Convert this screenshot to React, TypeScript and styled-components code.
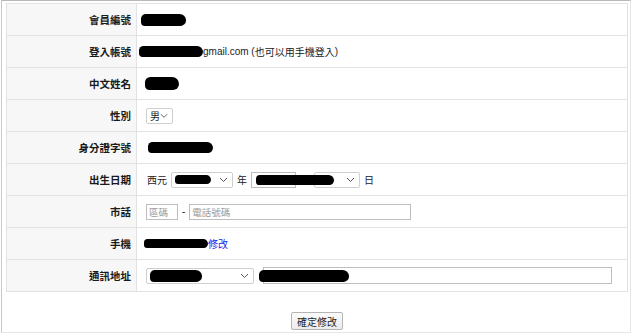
import React from "react";
import styled, { createGlobalStyle } from "styled-components";

const Global = createGlobalStyle`
  html, body { margin: 0; padding: 0; background: #fff; }
  body { font-family: "Liberation Sans", "Noto Sans CJK TC", sans-serif; color: #222; }
`;

const Frame = styled.div`
  box-sizing: border-box;
  width: 630px;
  height: 333px;
  margin-left: 1px;
  border-top: 1px solid #b9b9b9;
  border-left: 1px solid #c8c8c8;
  border-right: 1px solid #e6e6e6;
  border-bottom: 1px solid #e6e6e6;
  padding: 2px 2px 0 4px;
  display: flex;
  flex-direction: column;
  align-items: flex-start;
`;

const Table = styled.table`
  width: 622px;
  border-collapse: collapse;
  border: 1px solid #e2e2e2;
`;

const Row = styled.tr`
  height: 32px;
  border-bottom: 1px solid #e2e2e2;
`;

const Label = styled.th`
  width: 124px;
  padding: 0 5px 0 0;
  background: #f7f7f7;
  border-right: 1px solid #e2e2e2;
  text-align: right;
  font-family: "Noto Sans CJK TC", sans-serif;
  font-size: 10.5px;
  font-weight: 700;
  color: #1a1a1a;
`;

const Value = styled.td`
  padding: 0 0 0 ${(p: { $pad?: number }) => p.$pad ?? 4}px;
  background: #fff;
  font-size: 10px;
  color: #222;
`;

const Line = styled.div`
  display: flex;
  align-items: center;
  gap: ${(p: { $gap?: number }) => p.$gap ?? 4}px;
  font-family: "Liberation Sans", "Noto Sans CJK TC", sans-serif;
  font-size: 10px;
`;

const Blob = styled.span<{ $w: number; $h?: number; $ml?: number }>`
  position: relative;
  z-index: 2;
  display: inline-block;
  flex: none;
  width: ${(p) => p.$w}px;
  height: ${(p) => p.$h ?? 11}px;
  margin-left: ${(p) => p.$ml ?? 0}px;
  background: #000;
  border-radius: 6px 8px 7px 5px;
`;

const SelectBox = styled.span<{ $w: number }>`
  box-sizing: border-box;
  display: inline-flex;
  align-items: center;
  justify-content: space-between;
  flex: none;
  width: ${(p) => p.$w}px;
  height: 16px;
  padding: 0 4px 0 3px;
  border: 1px solid #cfcfcf;
  border-radius: 2px;
  background: #fff;
  font-family: "Noto Sans CJK TC", sans-serif;
  font-size: 10px;
  color: #222;
`;

const Chevron = () => (
  <svg width="9" height="6" viewBox="0 0 9 6" fill="none">
    <path d="M1 1l3.5 3.5L8 1" stroke="#555" strokeWidth="1" />
  </svg>
);

const TextBox = styled.span<{ $w: number; $h?: number }>`
  box-sizing: border-box;
  display: inline-flex;
  align-items: center;
  flex: none;
  width: ${(p) => p.$w}px;
  height: ${(p) => p.$h ?? 16}px;
  padding: 0 2px;
  border: 1px solid #bdbdbd;
  background: #fff;
  font-family: "Noto Sans CJK TC", sans-serif;
  font-size: 9.5px;
  color: #9a9a9a;
  overflow: visible;
`;

const Cjk = styled.span<{ $color?: string }>`
  font-family: "Noto Sans CJK TC", sans-serif;
  color: ${(p) => p.$color ?? "#222"};
`;

const Link = styled.a`
  font-family: "Noto Sans CJK TC", sans-serif;
  color: #2020ee;
  text-decoration: none;
  font-size: 10px;
`;

const Footer = styled.div`
  width: 622px;
  display: flex;
  justify-content: center;
  padding-top: 20px;
`;

const Button = styled.button`
  box-sizing: border-box;
  height: 18px;
  width: 52px;
  padding: 0;
  border: 1px solid #b5b5b5;
  border-radius: 2px;
  background: linear-gradient(#fbfbfb, #ececec);
  font-family: "Noto Sans CJK TC", sans-serif;
  font-size: 10px;
  color: #222;
`;

export default function App() {
  return (
    <>
      <Global />
      <Frame>
        <Table>
          <tbody>
            <Row>
              <Label>會員編號</Label>
              <Value><Line><Blob $w={45} $h={12} /></Line></Value>
            </Row>
            <Row>
              <Label>登入帳號</Label>
              <Value $pad={2}>
                <Line $gap={0}>
                  <Blob $w={64} $h={11} />
                  <span>gmail.com (</span>
                  <Cjk>也可以用手機登入</Cjk>
                  <span>)</span>
                </Line>
              </Value>
            </Row>
            <Row>
              <Label>中文姓名</Label>
              <Value $pad={8}><Line><Blob $w={34} $h={13} /></Line></Value>
            </Row>
            <Row>
              <Label>性別</Label>
              <Value $pad={9}>
                <Line>
                  <SelectBox $w={27}>男<Chevron /></SelectBox>
                </Line>
              </Value>
            </Row>
            <Row>
              <Label>身分證字號</Label>
              <Value $pad={11}><Line><Blob $w={65} $h={11} /></Line></Value>
            </Row>
            <Row>
              <Label>出生日期</Label>
              <Value $pad={10}>
                <Line>
                  <Cjk>西元</Cjk>
                  <SelectBox $w={62}><Blob $w={36} $h={9} /><Chevron /></SelectBox>
                  <Cjk>年</Cjk>
                  <TextBox $w={45}><Blob $w={78} $h={10} $ml={2} /></TextBox>
                  <Cjk $color="#888">月</Cjk>
                  <SelectBox $w={46}><span /><Chevron /></SelectBox>
                  <Cjk>日</Cjk>
                </Line>
              </Value>
            </Row>
            <Row>
              <Label>市話</Label>
              <Value $pad={9}>
                <Line>
                  <TextBox $w={32}>區碼</TextBox>
                  <span>-</span>
                  <TextBox $w={222}>電話號碼</TextBox>
                </Line>
              </Value>
            </Row>
            <Row>
              <Label>手機</Label>
              <Value $pad={7}>
                <Line $gap={0}>
                  <Blob $w={64} $h={9} />
                  <Link href="#">修改</Link>
                </Line>
              </Value>
            </Row>
            <Row>
              <Label>通訊地址</Label>
              <Value $pad={9}>
                <Line $gap={9}>
                  <SelectBox $w={108}><Blob $w={52} $h={12} /><Chevron /></SelectBox>
                  <TextBox $w={349} $h={17}><Blob $w={90} $h={12} $ml={-7} /></TextBox>
                </Line>
              </Value>
            </Row>
          </tbody>
        </Table>
        <Footer>
          <Button>確定修改</Button>
        </Footer>
      </Frame>
    </>
  );
}
